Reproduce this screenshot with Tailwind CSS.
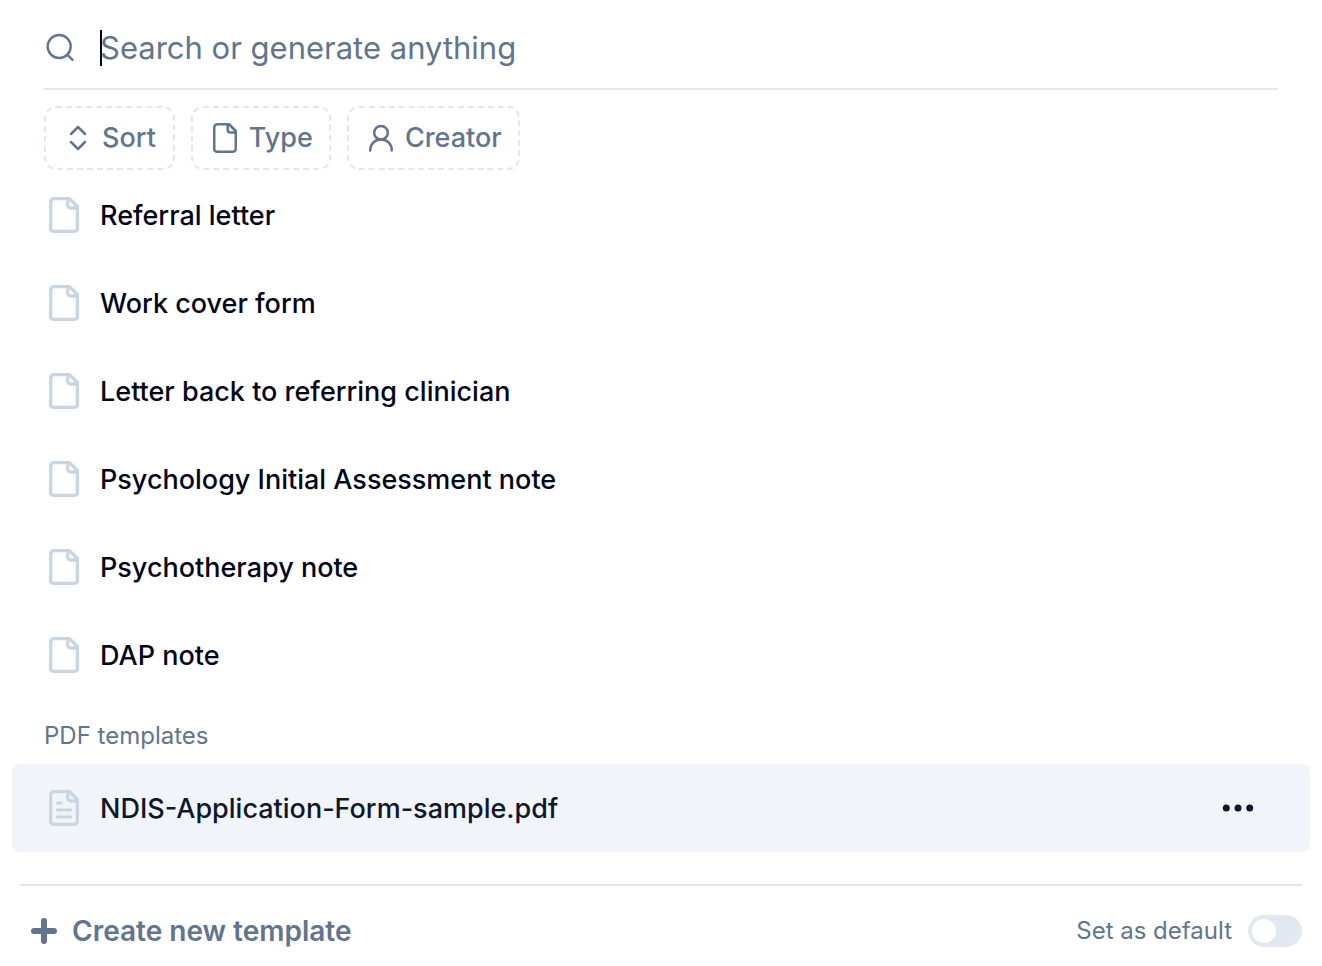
<!DOCTYPE html>
<html lang="en">
<head>
<meta charset="utf-8">
<meta name="viewport" content="width=device-width, initial-scale=1">
<title>Templates</title>
<script src="https://cdn.jsdelivr.net/npm/@tailwindcss/browser@4"></script>
</head>
<body class="bg-white font-['Inter','Liberation_Sans',sans-serif] text-slate-950">
<svg class="hidden" aria-hidden="true">
  <symbol id="file" viewBox="0 0 30 36">
    <g fill="none" stroke="currentColor" stroke-width="3.300" stroke-linecap="round" stroke-linejoin="round">
      <path d="M5 1.650H20.500L28.350 9.500V31.350a3 3 0 0 1-3 3H4.650a3 3 0 0 1-3-3V5a3.350 3.350 0 0 1 3.350-3.350Z"/>
      <path d="M18.800 2V8.200a2.800 2.800 0 0 0 2.800 2.800H28"/>
    </g>
  </symbol>
</svg>
<main class="flex flex-col">
  <header class="mx-11 flex h-[90px] items-center gap-6 border-b-2 border-slate-200 pt-2">
    <svg class="size-8 shrink-0 text-slate-500" viewBox="0 0 32 32" fill="none" stroke="currentColor" stroke-width="2.400" stroke-linecap="round" aria-hidden="true"><circle cx="15.200" cy="14.500" r="11.500"/><path d="m23.300 22.600 5.200 5.200"/></svg>
    <div class="relative flex-1">
      <input type="text" aria-label="Search or generate anything" placeholder="Search or generate anything" class="block h-10 w-full text-[31px] leading-10 outline-none placeholder:text-slate-500">
      <span class="absolute left-0 top-0.5 h-9 w-0.5 bg-slate-950"></span>
    </div>
  </header>

  <div class="mx-11 mt-4 flex gap-4 text-[27px] leading-9 font-medium text-slate-500">
    <button type="button" class="flex h-16 items-center gap-2 rounded-xl border-2 border-dashed border-slate-200 pl-4 pr-[17px]">
      <svg class="size-8" viewBox="0 0 32 32" fill="none" stroke="currentColor" stroke-width="2.500" stroke-linecap="round" stroke-linejoin="round" aria-hidden="true"><path d="m9 12 7-7 7 7M9 20l7 7 7-7"/></svg>Sort</button>
    <button type="button" class="flex h-16 items-center gap-3 rounded-xl border-2 border-dashed border-slate-200 pl-5 pr-4">
      <svg class="h-[30px] w-6" viewBox="0 0 24 30" fill="none" stroke="currentColor" stroke-width="2.500" stroke-linecap="round" stroke-linejoin="round" aria-hidden="true"><path d="M4.500 1.250H16L22.750 8V26a2.750 2.750 0 0 1-2.750 2.750H4A2.750 2.750 0 0 1 1.250 26V4.500A3.250 3.250 0 0 1 4.500 1.250Z"/><path d="M14.700 1.500V7a2.500 2.500 0 0 0 2.500 2.500H22.500"/></svg>Type</button>
    <button type="button" class="flex h-16 items-center gap-3 rounded-xl border-2 border-dashed border-slate-200 pl-5 pr-4">
      <svg class="h-7 w-6" viewBox="0 0 24 28" fill="none" stroke="currentColor" stroke-width="2.500" stroke-linecap="round" aria-hidden="true"><circle cx="12" cy="8.700" r="6.800"/><path d="M1.250 26.500C1.250 20 5.500 15.500 12 15.500S22.750 20 22.750 26.500"/></svg>Creator</button>
  </div>

  <ul class="mx-3 mt-px text-[27px] leading-9 font-medium">
    <li><a href="#" class="flex h-22 items-center gap-[21px] rounded-lg px-9"><svg class="ml-px h-9 w-[30px] text-slate-300" aria-hidden="true"><use href="#file"/></svg><span class="pt-0.5">Referral letter</span></a></li>
    <li><a href="#" class="flex h-22 items-center gap-[21px] rounded-lg px-9"><svg class="ml-px h-9 w-[30px] text-slate-300" aria-hidden="true"><use href="#file"/></svg><span class="pt-0.5">Work cover form</span></a></li>
    <li><a href="#" class="flex h-22 items-center gap-[21px] rounded-lg px-9"><svg class="ml-px h-9 w-[30px] text-slate-300" aria-hidden="true"><use href="#file"/></svg><span class="pt-0.5">Letter back to referring clinician</span></a></li>
    <li><a href="#" class="flex h-22 items-center gap-[21px] rounded-lg px-9"><svg class="ml-px h-9 w-[30px] text-slate-300" aria-hidden="true"><use href="#file"/></svg><span class="pt-0.5">Psychology Initial Assessment note</span></a></li>
    <li><a href="#" class="flex h-22 items-center gap-[21px] rounded-lg px-9"><svg class="ml-px h-9 w-[30px] text-slate-300" aria-hidden="true"><use href="#file"/></svg><span class="pt-0.5">Psychotherapy note</span></a></li>
    <li><a href="#" class="flex h-22 items-center gap-[21px] rounded-lg px-9"><svg class="ml-px h-9 w-[30px] text-slate-300" aria-hidden="true"><use href="#file"/></svg><span class="pt-0.5">DAP note</span></a></li>
  </ul>

  <h2 class="mx-11 mt-[21px] text-[24px] leading-8 text-slate-500">PDF templates</h2>
  <div class="mx-3 mt-3 flex h-22 items-center justify-between rounded-lg bg-slate-100 pl-9 pr-14 text-[27px] leading-9 font-medium text-slate-900">
    <a href="#" class="flex items-center gap-[21px]">
      <svg class="ml-px h-9 w-[30px] text-slate-300" viewBox="0 0 30 36" aria-hidden="true"><use href="#file"/><path d="M8.300 13H12M8.300 20H21.700M8.300 27H21.700" fill="none" stroke="currentColor" stroke-width="3" stroke-linecap="round"/></svg><span class="pt-0.5">NDIS-Application-Form-sample.pdf</span></a>
    <button type="button" aria-label="More options"><svg class="h-8 w-8" viewBox="0 0 32 32" fill="currentColor" aria-hidden="true"><circle cx="4.300" cy="16" r="3.500"/><circle cx="16" cy="16" r="3.500"/><circle cx="27.700" cy="16" r="3.500"/></svg></button>
  </div>

  <footer class="mx-5 mt-8 flex h-20 items-center justify-between border-t-2 border-slate-200 pt-3 text-slate-500">
    <button type="button" class="flex items-center gap-3 pl-2 text-[28px] leading-9 font-semibold">
      <svg class="size-8" viewBox="0 0 32 32" fill="none" stroke="currentColor" stroke-width="6" stroke-linecap="round" aria-hidden="true"><path d="M16 6V26M6 16H26"/></svg>Create new template</button>
    <label class="flex items-center gap-4 text-[24px] leading-8">Set as default
      <input type="checkbox" role="switch" class="h-8 w-[54px] appearance-none rounded-full bg-slate-200 p-1 before:block before:size-6 before:rounded-full before:bg-white before:content-[''] checked:bg-slate-500 checked:before:ml-auto">
    </label>
  </footer>
</main>
</body>
</html>
